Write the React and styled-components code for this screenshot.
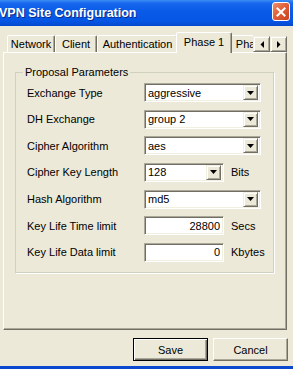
import React from 'react';
import styled, { createGlobalStyle } from 'styled-components';

const GlobalStyle = createGlobalStyle`
  html, body {
    margin: 0;
    padding: 0;
  }
  body {
    background: #ECE9D8;
    font-family: "Liberation Sans", Arial, sans-serif;
    font-size: 11px;
    color: #000;
  }
`;

const tabs = [
  { name: 'Network', width: 48 },
  { name: 'Client', width: 42 },
  { name: 'Authentication', width: 81 },
  { name: 'Phase 1', width: 52, active: true },
  { name: 'Phase 2', width: 52 },
];

const rows = [
  { label: 'Exchange Type', kind: 'select', value: 'aggressive' },
  { label: 'DH Exchange', kind: 'select', value: 'group 2' },
  { label: 'Cipher Algorithm', kind: 'select', value: 'aes' },
  { label: 'Cipher Key Length', kind: 'select', value: '128', width: 80, unit: 'Bits' },
  { label: 'Hash Algorithm', kind: 'select', value: 'md5' },
  { label: 'Key Life Time limit', kind: 'text', value: '28800', unit: 'Secs' },
  { label: 'Key Life Data limit', kind: 'text', value: '0', unit: 'Kbytes' },
];

function App() {
  return (
    <>
      <GlobalStyle />
      <Window>
        <TitleBar>
          <TitleText>VPN Site Configuration</TitleText>
          <CloseButton>
            <svg width="10" height="10" viewBox="0 0 10 10">
              <path d="M1.5 1.5 L8.5 8.5 M8.5 1.5 L1.5 8.5" stroke="#fff" strokeWidth="2" strokeLinecap="square" />
            </svg>
          </CloseButton>
        </TitleBar>

        <Content>
          <TabRow>
            <TabStrip>
              {tabs.map((t) => (
                <Tab key={t.name} $width={t.width} $active={t.active}>
                  {t.name}
                </Tab>
              ))}
            </TabStrip>
            <ScrollArrows>
              <ScrollButton>
                <svg width="4" height="7" viewBox="0 0 4 7">
                  <polygon points="4,0 4,7 0.5,3.5" fill="#000" />
                </svg>
              </ScrollButton>
              <ScrollButton>
                <svg width="4" height="7" viewBox="0 0 4 7">
                  <polygon points="0,0 0,7 3.5,3.5" fill="#000" />
                </svg>
              </ScrollButton>
            </ScrollArrows>
          </TabRow>

          <Panel>
            <GroupBox>
              <Legend>Proposal Parameters</Legend>
              <Rows>
                {rows.map((r) => (
                  <Row key={r.label}>
                    <Label>{r.label}</Label>
                    {r.kind === 'select' ? (
                      <SelectBox $width={r.width || 117}>
                        <FieldValue>{r.value}</FieldValue>
                        <DropButton>
                          <svg width="7" height="4" viewBox="0 0 7 4">
                            <polygon points="0,0 7,0 3.5,4" fill="#000" />
                          </svg>
                        </DropButton>
                      </SelectBox>
                    ) : (
                      <TextField $width={80}>
                        <FieldValue $right>{r.value}</FieldValue>
                      </TextField>
                    )}
                    {r.unit && <Unit>{r.unit}</Unit>}
                  </Row>
                ))}
              </Rows>
            </GroupBox>
          </Panel>

          <ButtonRow>
            <Button $default>Save</Button>
            <Button>Cancel</Button>
          </ButtonRow>
        </Content>
      </Window>
    </>
  );
}

const Window = styled.div`
  width: 293px;
  height: 369px;
  box-sizing: border-box;
  overflow: hidden;
  display: flex;
  flex-direction: column;
  background: #ECE9D8;
  border-bottom: 3px solid #0A48CF;
`;

const TitleBar = styled.div`
  height: 26px;
  flex: none;
  display: flex;
  align-items: flex-start;
  justify-content: space-between;
  padding-right: 3px;
  background: linear-gradient(
    to bottom,
    #3C8DF6 0%,
    #1868EC 12%,
    #0A5BE8 40%,
    #0656E5 80%,
    #0449CE 100%
  );
`;

const TitleText = styled.div`
  margin-top: 6px;
  margin-left: -1px;
  color: #fff;
  font-weight: bold;
  font-size: 12.5px;
  line-height: 14px;
  white-space: nowrap;
  text-shadow: 1px 1px 0 #0A2A8A;
`;

const CloseButton = styled.div`
  margin-top: 2px;
  width: 18px;
  height: 19px;
  box-sizing: border-box;
  border: 1px solid #fff;
  border-radius: 3px;
  background: linear-gradient(to bottom right, #EE8D6C 0%, #E2603A 45%, #C8421D 100%);
  display: flex;
  align-items: center;
  justify-content: center;
`;

const Content = styled.div`
  flex: 1;
  display: flex;
  flex-direction: column;
  padding: 6px 6px 0 3px;
`;

const TabRow = styled.div`
  height: 21px;
  display: flex;
  align-items: flex-start;
  margin-bottom: -1px;
  position: relative;
  z-index: 1;
`;

const TabStrip = styled.div`
  flex: 1;
  height: 21px;
  display: flex;
  align-items: flex-start;
  overflow: hidden;
  padding-left: 4px;
`;

const Tab = styled.div`
  flex: none;
  box-sizing: border-box;
  width: ${(p) => p.$width + (p.$active ? 4 : 0)}px;
  height: ${(p) => (p.$active ? 21 : 17)}px;
  margin: ${(p) => (p.$active ? '0 -2px' : '3px 0 0')};
  padding-bottom: ${(p) => (p.$active ? 3 : 0)}px;
  display: flex;
  align-items: center;
  justify-content: center;
  white-space: nowrap;
  background: #ECE9D8;
  border: 1px solid;
  border-bottom: none;
  border-color: #fff #716F64 transparent #fff;
  border-radius: 2px 2px 0 0;
  box-shadow: inset -1px 0 0 #ACA899;
  position: relative;
  z-index: ${(p) => (p.$active ? 2 : 1)};
`;

const ScrollArrows = styled.div`
  flex: none;
  display: flex;
  margin-top: 4px;
`;

const ScrollButton = styled.div`
  width: 17px;
  height: 16px;
  box-sizing: border-box;
  background: #ECE9D8;
  border: 1px solid;
  border-color: #F1EFE2 #716F64 #716F64 #F1EFE2;
  box-shadow: inset 1px 1px 0 #fff, inset -1px -1px 0 #ACA899;
  display: flex;
  align-items: center;
  justify-content: center;
`;

const Panel = styled.div`
  flex: none;
  height: 278px;
  box-sizing: border-box;
  border: 1px solid;
  border-color: #fff #716F64 #716F64 #fff;
  box-shadow: inset -1px -1px 0 #ACA899;
  padding-top: 13px;
`;

const GroupBox = styled.fieldset`
  margin: 0 12px 0 11px;
  padding: 4px 0 10px 11px;
  border: 1px solid #D0D0BF;
  box-shadow: 1px 1px 0 #fff;
`;

const Legend = styled.legend`
  margin-left: -4px;
  padding: 0 2px;
  line-height: 13px;
`;

const Rows = styled.div`
  display: flex;
  flex-direction: column;
  gap: 7.67px;
`;

const Row = styled.div`
  height: 19px;
  display: flex;
  align-items: center;
`;

const Label = styled.div`
  width: 117px;
  flex: none;
  white-space: nowrap;
`;

const sunken = `
  box-sizing: border-box;
  height: 19px;
  background: #fff;
  border: 1px solid;
  border-color: #ACA899 #fff #fff #ACA899;
  box-shadow: inset 1px 1px 0 #716F64, inset -1px -1px 0 #F1EFE2;
  display: flex;
  align-items: center;
`;

const SelectBox = styled.div`
  ${sunken}
  width: ${(p) => p.$width}px;
  padding: 0 2px 0 2px;
`;

const TextField = styled.div`
  ${sunken}
  width: ${(p) => p.$width}px;
  padding: 0 3px 0 2px;
`;

const FieldValue = styled.div`
  flex: 1;
  white-space: nowrap;
  overflow: hidden;
  text-align: ${(p) => (p.$right ? 'right' : 'left')};
  padding-left: 1px;
`;

const DropButton = styled.div`
  flex: none;
  width: 15px;
  height: 15px;
  box-sizing: border-box;
  background: #ECE9D8;
  border: 1px solid;
  border-color: #F1EFE2 #716F64 #716F64 #F1EFE2;
  box-shadow: inset 1px 1px 0 #fff, inset -1px -1px 0 #ACA899;
  display: flex;
  align-items: center;
  justify-content: center;
`;

const Unit = styled.div`
  margin-left: 7px;
  white-space: nowrap;
`;

const ButtonRow = styled.div`
  display: flex;
  justify-content: flex-end;
  gap: 5px;
  margin: 8px -1px 0 0;
`;

const Button = styled.div`
  width: 75px;
  height: 23px;
  box-sizing: border-box;
  display: flex;
  align-items: center;
  justify-content: center;
  background: #ECE9D8;
  border: 1px solid;
  border-color: ${(p) => (p.$default ? '#000' : '#fff #716F64 #716F64 #fff')};
  box-shadow: ${(p) =>
    p.$default
      ? 'inset 1px 1px 0 #fff, inset -1px -1px 0 #716F64, inset -2px -2px 0 #ACA899'
      : 'inset -1px -1px 0 #ACA899'};
`;

export default App;
